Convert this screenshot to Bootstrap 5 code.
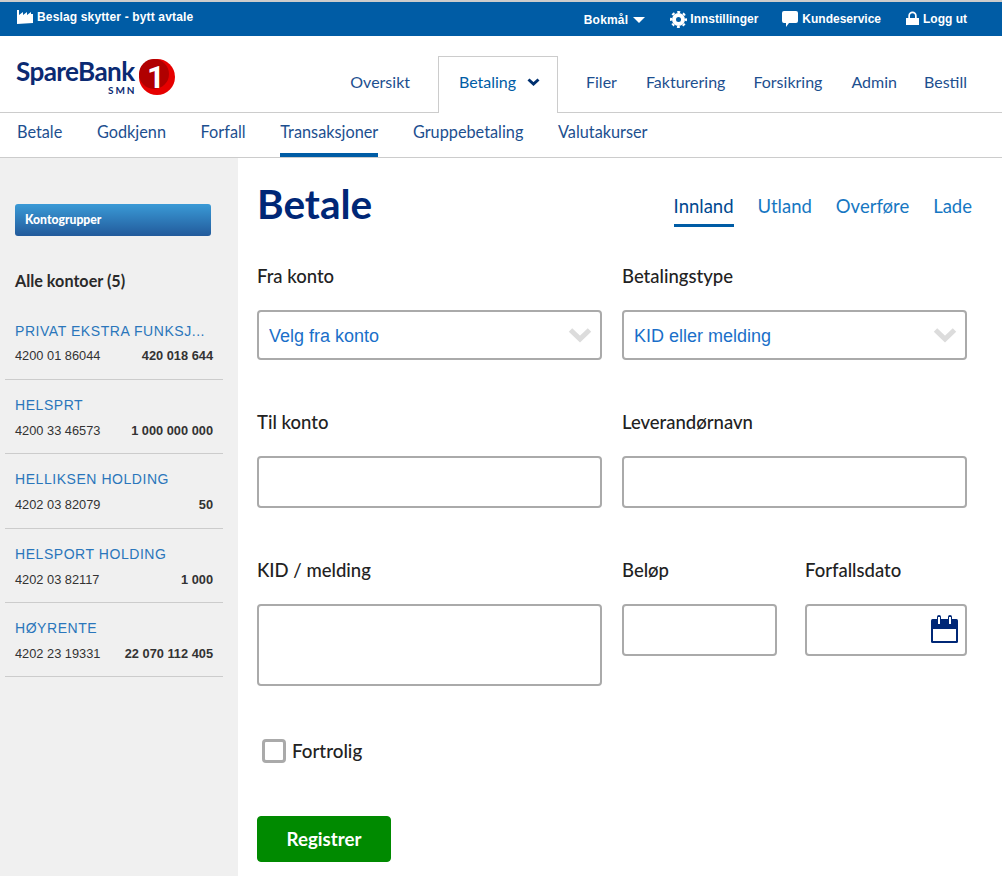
<!DOCTYPE html>
<html lang="no">
<head>
  <meta charset="UTF-8" />
  <meta name="viewport" content="width=device-width, initial-scale=1.0" />
  <title>Betale</title>
  <link href="https://cdn.jsdelivr.net/npm/bootstrap@5.3.0/dist/css/bootstrap.min.css" rel="stylesheet">
  <style>
    html, body { height: 100%; }
    body { font-family: Lato, "Liberation Sans", sans-serif; color: #222; overflow: hidden; background: #fff; }
    a { text-decoration: none; }

    .topbar { height: 36px; background: #005ca5; border-top: 2px solid #ccc; color: #fff; font: bold 12px/16px "Liberation Sans", Arial, sans-serif; }
    .topbar a { color: #fff; }
    .topbar svg { fill: #fff; display: block; }
    .topbar svg circle { fill: none; stroke: #fff; }
    .agreement-link { margin: 0 0 5px 17px; letter-spacing: .15px; }
    .lang-link { margin: 2px 25px 0 0; letter-spacing: .2px; }
    .lock-icon { margin-bottom: 2px; }

    .mainhead { height: 77px; border-bottom: 1px solid #ccc; }
    .logo-link { margin: 23px 0 0 16px; }
    .logo-mark { margin-left: 4px; overflow: visible; }
    .logo-text { font: bold 26.1px/25px Lato, sans-serif; color: #0b2a72; letter-spacing: -.6px; }
    .logo-sub { font: bold 10px/11px Lato, sans-serif; color: #0b2a72; letter-spacing: 2px; margin: 1px -2px 0 0; }
    .mainnav a { color: #1d4f8f; font-size: 16px; line-height: 20px; margin-bottom: 20px; }
    .mainnav .active-tab { width: 120px; height: 57px; border: 1px solid #ccc; border-bottom: 0; background: #fff; margin-bottom: -1px; padding: 0 0 6px 3px; color: #005ca5; gap: 11px; }

    .subnav { height: 45px; border-bottom: 1px solid #ccc; padding-left: 17px; gap: 34.6px; }
    .subnav a { color: #1d4f8f; font-size: 16.3px; line-height: 20px; padding-top: 9px; height: 44px; border-bottom: 4px solid transparent; }
    .subnav a.current { border-bottom-color: #005ca5; }

    .sidebar { width: 238px; background: #f0f0f0; padding: 46px 15px 0 5px; }
    .group-btn { display: block; width: 196px; height: 32px; margin-left: 10px; padding: 0 10px; background: linear-gradient(#3a9ad6, #225a9b); color: #fff; border-radius: 3px; font-size: 12.2px; font-weight: 900; line-height: 32px; }
    .all-accounts { margin: 35px 0 31px 10px; font-size: 16.2px; font-weight: 700; line-height: 20px; color: #2a2a2a; }
    .acct { border-bottom: 1px solid #ccc; padding: 16px 10px 0; height: 74.3px; }
    .acct:first-of-type { height: 58px; padding-top: 0; }
    .acct-name { display: block; color: #2a76bb; font: 14px/18px "Liberation Sans", Arial, sans-serif; letter-spacing: .55px; }
    .acct-line { font: 12.8px/16px "Liberation Sans", Arial, sans-serif; color: #333; margin-top: 9px; }
    .acct:first-of-type .acct-line { margin-top: 8px; }

    .pagebody { padding: 0 35px 0 19px; }
    .page-head { height: 108px; padding-top: 22px; margin-right: -5px; }
    .page-title { color: #002776; font-size: 40.5px; font-weight: 700; line-height: 48px; margin: 0; }
    .tabs-right { gap: 24px; margin-top: 5px; }
    .tabs-right a { color: #1677c2; font-size: 18.5px; line-height: 22px; height: 42px; padding-top: 10px; border-bottom: 3px solid transparent; }
    .tabs-right a.current { color: #00488f; border-bottom-color: #005ca5; }
    .field-label { display: block; font-size: 18.5px; line-height: 22px; margin: -1px 0 23px; color: #222; font-weight: 500; }
    .form-row-x { display: grid; grid-template-columns: 345px 345px; column-gap: 20px; margin-bottom: 52px; }
    .pair-x { display: grid; grid-template-columns: 155px 162px; column-gap: 28px; }
    .form-control.box, .form-select.box { border: 2px solid #aaa; border-radius: 4px; box-shadow: none; }
    .form-select.box { height: 50px; color: #1a6fc9; font: 18px "Liberation Sans", Arial, sans-serif; padding: 8px 36px 6px 10px;
      background-image: url("data:image/svg+xml,%3Csvg xmlns='http://www.w3.org/2000/svg' viewBox='0 0 24 16'%3E%3Cpath d='M2.500 3L12 12l9.500-9' fill='none' stroke='%23dcdcdc' stroke-width='5'/%3E%3C/svg%3E");
      background-size: 24px 16px; background-position: right 8px center; }
    .field-52 { height: 52px; }
    .field-82 { height: 82px; resize: none; }
    .date-icon { position: absolute; right: 9px; top: 11px; }
    .check-row { margin: 0 0 53px 5px; gap: 6px; }
    .check-box { width: 24px; height: 24px; margin: 0; border: 3px solid #aaa; border-radius: 4px; }
    .check-label { font-size: 18.8px; line-height: 24px; color: #222; font-weight: 500; }
    .btn-register { width: 134px; height: 46px; background: #008a00; border-color: #008a00; color: #fff; font-size: 18.7px; font-weight: 700; border-radius: 4px; padding: 0; }
  </style>
</head>
<body>
  <div class="topbar d-flex align-items-center">
    <a href="#" class="agreement-link d-flex align-items-center gap-1">
      <svg width="16" height="14" viewBox="0 0 16 14"><path d="M0 14V0h2v5l4-3v3l4-3v3l4-3v2h2v9z"/></svg>
      <span>Beslag skytter - bytt avtale</span>
    </a>
    <div class="d-flex align-items-center ms-auto" style="margin-right:35px">
      <a href="#" class="lang-link d-flex align-items-center" style="gap:5px"><span>Bokmål</span><svg width="12" height="6" viewBox="0 0 12 6"><path d="M0 0h12L6 6z"/></svg></a>
      <a href="#" class="d-flex align-items-center" style="gap:3px;margin-right:24px">
        <svg width="17" height="17" viewBox="0 0 17 17">
          <circle cx="8.500" cy="8.500" r="4.500" stroke-width="4"/>
          <circle cx="8.500" cy="8.500" r="7.500" stroke-width="2" stroke-dasharray="2.950 2.940" stroke-dashoffset="1.470"/>
        </svg>
        <span>Innstillinger</span>
      </a>
      <a href="#" class="d-flex align-items-center" style="gap:4px;margin-right:25px">
        <svg width="16" height="16" viewBox="0 0 16 16"><path d="M2 0h12a2 2 0 0 1 2 2v8a2 2 0 0 1-2 2H7l-3 4v-4H2a2 2 0 0 1-2-2V2a2 2 0 0 1 2-2z"/></svg>
        <span>Kundeservice</span>
      </a>
      <a href="#" class="d-flex align-items-center" style="gap:4px">
        <svg class="lock-icon" width="13" height="14" viewBox="0 -1 13 14"><path fill-rule="evenodd" d="M0 6h2.300V3.700a4.200 4.200 0 0 1 8.400 0V6H13v7H0zM4 6h5V3.700a2.500 2.500 0 0 0-5 0z"/></svg>
        <span>Logg ut</span>
      </a>
    </div>
  </div>

  <header class="mainhead d-flex align-items-end">
    <a href="#" class="logo-link d-flex align-self-start">
      <span class="d-flex flex-column align-items-end">
        <span class="logo-text">SpareBank</span>
        <span class="logo-sub">SMN</span>
      </span>
      <svg class="logo-mark" width="36" height="36" viewBox="0 0 36 36">
        <circle cx="18" cy="18" r="18" fill="#e60000"/>
        <circle cx="15" cy="15" r="15" fill="#b00000"/>
        <text x="17" y="29" text-anchor="middle" font-family="Roboto, sans-serif" font-weight="700" font-size="31" fill="#fff">1</text>
      </svg>
    </a>
    <nav class="mainnav d-flex align-items-end ms-auto" style="margin-right:35px">
      <a href="#" style="margin-right:28px">Oversikt</a>
      <a href="#" class="active-tab d-flex align-items-center justify-content-center">Betaling
        <svg width="13" height="8" viewBox="0 0 13 8"><path d="M1.500 1.500l5 4.500 5-4.500" fill="none" stroke="#00306f" stroke-width="3"/></svg>
      </a>
      <a href="#" style="margin-left:28px;margin-right:29px">Filer</a>
      <a href="#" style="margin-right:28px">Fakturering</a>
      <a href="#" style="margin-right:29px">Forsikring</a>
      <a href="#" style="margin-right:27px">Admin</a>
      <a href="#">Bestill</a>
    </nav>
  </header>

  <nav class="subnav d-flex">
    <a href="#">Betale</a>
    <a href="#">Godkjenn</a>
    <a href="#">Forfall</a>
    <a href="#" class="current">Transaksjoner</a>
    <a href="#">Gruppebetaling</a>
    <a href="#">Valutakurser</a>
  </nav>

  <div class="d-flex" style="height:718px">
    <aside class="sidebar flex-shrink-0">
      <a href="#" class="group-btn">Kontogrupper</a>
      <div class="all-accounts">Alle kontoer (5)</div>
      <div id="accounts"></div>
    </aside>

    <main class="pagebody flex-grow-1">
      <div class="page-head d-flex justify-content-between">
        <h1 class="page-title">Betale</h1>
        <nav class="tabs-right d-flex align-self-start">
          <a href="#" class="current">Innland</a>
          <a href="#">Utland</a>
          <a href="#">Overføre</a>
          <a href="#">Lade</a>
        </nav>
      </div>
      <form onsubmit="return false">
        <div class="form-row-x">
          <div><label class="field-label">Fra konto</label><select class="form-select box"><option>Velg fra konto</option></select></div>
          <div><label class="field-label">Betalingstype</label><select class="form-select box"><option>KID eller melding</option></select></div>
        </div>
        <div class="form-row-x">
          <div><label class="field-label">Til konto</label><input class="form-control box field-52" type="text"></div>
          <div><label class="field-label">Leverandørnavn</label><input class="form-control box field-52" type="text"></div>
        </div>
        <div class="form-row-x" style="margin-bottom:53px">
          <div><label class="field-label">KID / melding</label><textarea class="form-control box field-82"></textarea></div>
          <div class="pair-x">
            <div><label class="field-label">Beløp</label><input class="form-control box field-52" type="text"></div>
            <div><label class="field-label">Forfallsdato</label>
              <div class="position-relative">
                <input class="form-control box field-52" type="text">
                <svg class="date-icon" width="27" height="28" viewBox="0 0 27 28">
                  <rect x="0" y="4" width="27" height="24" rx="1.500" fill="#002776"/>
                  <rect x="2" y="14" width="23" height="12" fill="#fff"/>
                  <rect x="6" y="0" width="4" height="10" rx="2" fill="#002776"/>
                  <rect x="7" y="2" width="2" height="7" fill="#fff"/>
                  <rect x="17" y="0" width="4" height="10" rx="2" fill="#002776"/>
                  <rect x="18" y="2" width="2" height="7" fill="#fff"/>
                </svg>
              </div>
            </div>
          </div>
        </div>
        <div class="check-row d-flex align-items-center">
          <input type="checkbox" class="form-check-input check-box" id="fortrolig">
          <label class="check-label" for="fortrolig">Fortrolig</label>
        </div>
        <button type="submit" class="btn btn-register">Registrer</button>
      </form>
    </main>
  </div>

  <script>
    const accounts = [
      ['PRIVAT EKSTRA FUNKSJ...', '4200 01 86044', '420 018 644'],
      ['HELSPRT', '4200 33 46573', '1 000 000 000'],
      ['HELLIKSEN HOLDING', '4202 03 82079', '50'],
      ['HELSPORT HOLDING', '4202 03 82117', '1 000'],
      ['HØYRENTE', '4202 23 19331', '22 070 112 405']
    ];
    document.getElementById('accounts').innerHTML = accounts.map(a => `
      <div class="acct">
        <a href="#" class="acct-name">${a[0]}</a>
        <div class="acct-line d-flex justify-content-between"><span>${a[1]}</span><strong>${a[2]}</strong></div>
      </div>`).join('');
  </script>
  <script src="https://cdn.jsdelivr.net/npm/bootstrap@5.3.0/dist/js/bootstrap.bundle.min.js"></script>
</body>
</html>
